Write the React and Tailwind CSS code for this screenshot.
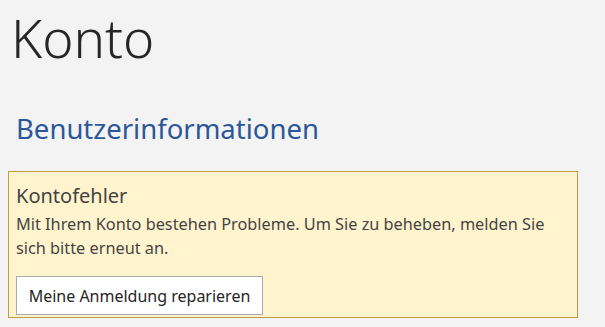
import React from 'react';

const App = () => {
  return (
    <div
      className="w-[605px] h-[327px] overflow-hidden bg-[#f3f3f3] text-[#262626]"
      style={{ fontFamily: '"Noto Sans", "Open Sans", sans-serif' }}
    >
      {/* Page title */}
      <h1 className="pl-[11px] pt-[2px] text-[53px] font-light leading-[72px] text-[#262626]">Konto</h1>

      {/* Section heading */}
      <h2 className="pl-[16px] mt-[38px] text-[27.5px] leading-[34px] text-[#2b579a]">Benutzerinformationen</h2>

      {/* Error panel */}
      <div className="ml-[8px] mt-[25px] w-[570px] h-[147px] border border-[#c19c47] bg-[#fff4ce] pl-[7px] pt-[10px]">
        <div className="text-[20px] leading-[28px] text-[#444444]">Kontofehler</div>
        <p className="mt-[2px] text-[16.3px] leading-[24px] text-[#444444] pr-[20px]">
          Mit Ihrem Konto bestehen Probleme. Um Sie zu beheben, melden Sie sich bitte erneut an.
        </p>
        <button className="mt-[16px] h-[39px] w-[247px] border border-[#ababab] bg-white text-[16px] text-[#262626]">
          Meine Anmeldung reparieren
        </button>
      </div>
    </div>
  );
};

export default App;
